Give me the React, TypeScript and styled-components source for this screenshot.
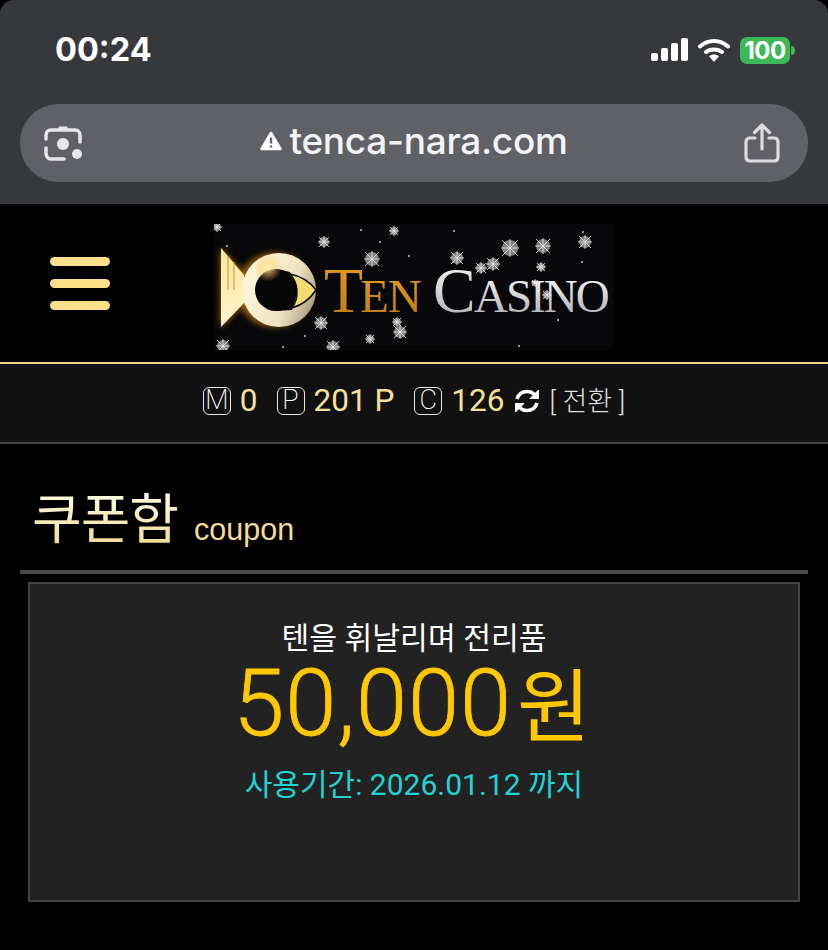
import React from "react";
import styled, { createGlobalStyle } from "styled-components";

const GlobalStyle = createGlobalStyle`
    html, body {
        margin: 0;
        padding: 0;
        background: #000;
    }
    body {
        font-family: Roboto, "Noto Sans CJK KR", sans-serif;
    }
`;

const Page = styled.div`
    width: 828px;
    height: 950px;
    overflow: hidden;
    background: #000;
`;

const Chrome = styled.div`
    height: 204px;
    box-sizing: border-box;
    padding: 0 20px 22px;
    background: #36383c;
    border-radius: 14px 14px 0 0;
    display: flex;
    flex-direction: column;
    justify-content: space-between;
`;

const StatusBar = styled.div`
    height: 100px;
    box-sizing: border-box;
    padding: 30px 18px 0 35px;
    display: flex;
    align-items: flex-start;
    justify-content: space-between;
`;

const Clock = styled.div`
    font-family: Inter, sans-serif;
    font-weight: 700;
    font-size: 32.5px;
    line-height: 40px;
    color: #fff;
`;

const StatusIcons = styled.div`
    display: flex;
    align-items: center;
    gap: 10px;
    height: 40px;
`;

const Battery = styled.div`
    position: relative;
    width: 50px;
    height: 27px;
    border-radius: 7px;
    background: #3cb956;
    color: #fff;
    font-family: Inter, sans-serif;
    font-weight: 700;
    font-size: 24px;
    line-height: 27px;
    letter-spacing: -0.5px;
    text-align: center;
    &::after {
        content: "";
        position: absolute;
        right: -5px;
        top: 9px;
        width: 4px;
        height: 9px;
        border-radius: 0 4px 4px 0;
        background: #3cb956;
    }
`;

const UrlBar = styled.div`
    height: 78px;
    box-sizing: border-box;
    padding: 0 28px 0 24px;
    border-radius: 38px;
    background: #606166;
    display: flex;
    align-items: center;
    justify-content: space-between;
`;

const Domain = styled.div`
    display: flex;
    align-items: center;
    gap: 7px;
    margin: -5px 0 0 2px;
    font-family: Inter, sans-serif;
    font-weight: 500;
    font-size: 37px;
    letter-spacing: -0.3px;
    color: #f4f4f6;
`;

const Header = styled.header`
    height: 160px;
    box-sizing: border-box;
    padding: 20px 0 12px 50px;
    display: flex;
    align-items: flex-start;
    border-bottom: 2px solid #e9d48c;
`;

const MenuButton = styled.div`
    width: 60px;
    margin-top: 33px;
    display: flex;
    flex-direction: column;
    gap: 13px;
`;

const MenuLine = styled.span`
    height: 9px;
    border-radius: 5px;
    background: #fbe08a;
`;

const Logo = styled.div`
    position: relative;
    width: 400px;
    height: 126px;
    margin-left: 104px;
    background: #08080a;
`;

const LogoArt = styled.svg`
    display: block;
    width: 100%;
    height: 100%;
`;

const InfoBar = styled.div`
    height: 80px;
    box-sizing: border-box;
    background: #111;
    border-bottom: 2px solid #444;
    display: flex;
    align-items: center;
    justify-content: center;
    padding: 0 0 4px 0;
`;

const Badge = styled.span<{ $gap?: number }>`
    width: 28px;
    height: 28px;
    box-sizing: border-box;
    border: 1.5px solid #e8e8e8;
    border-radius: 6px;
    color: #fff;
    font-size: 27px;
    font-weight: 200;
    line-height: 25px;
    text-align: center;
    margin-left: ${(p) => p.$gap ?? 0}px;
`;

const Amount = styled.span`
    margin-left: 9px;
    font-size: 31.5px;
    font-weight: 400;
    color: #f8e09a;
    line-height: 40px;
`;

const SwitchLabel = styled.span`
    margin: -3px 0 0 9px;
    font-family: Roboto, "Noto Sans CJK KR", sans-serif;
    font-size: 27px;
    font-weight: 300;
    color: #ddd;
`;

const TitleRow = styled.div`
    height: 130px;
    box-sizing: border-box;
    margin: 0 20px;
    padding: 35px 0 17px 12px;
    border-bottom: 4px solid #4a4a4a;
    display: flex;
    align-items: flex-end;
    gap: 16px;
`;

const Title = styled.h1`
    margin: 0;
    font-family: "Noto Sans CJK KR", sans-serif;
    font-size: 54px;
    line-height: 74px;
    font-weight: 400;
    letter-spacing: -1px;
    background: linear-gradient(180deg, #fffbe0 20%, #f2dc98 85%);
    -webkit-background-clip: text;
    background-clip: text;
    color: transparent;
`;

const TitleSub = styled.span`
    margin-bottom: 6px;
    font-family: "Liberation Sans", sans-serif;
    font-size: 30.5px;
    color: #f6dc96;
`;

const CouponCard = styled.section`
    height: 320px;
    box-sizing: border-box;
    margin: 8px 28px 0;
    padding: 35px 0 0;
    background: #222;
    border: 2px solid #444;
    text-align: center;
`;

const CouponName = styled.div`
    font-family: Roboto, "Noto Sans CJK KR", sans-serif;
    font-size: 30.2px;
    line-height: 40px;
    color: #fff;
`;

const CouponValue = styled.div`
    padding-right: 4px;
    font-family: Roboto, "Noto Sans CJK KR", sans-serif;
    font-size: 92px;
    font-weight: 300;
    line-height: 90px;
    letter-spacing: 1px;
    -webkit-text-stroke: 0.8px #ffc800;
    color: #ffc800;
`;

const CouponUnit = styled.span`
    margin-left: 5px;
    font-size: 80px;
    font-weight: 400;
    letter-spacing: 0;
    -webkit-text-stroke: 0;
`;

const CouponExpiry = styled.div`
    margin-top: 12px;
    font-family: Roboto, "Noto Sans CJK KR", sans-serif;
    font-size: 30px;
    font-weight: 400;
    line-height: 40px;
    color: #22d2d2;
`;

const SerifText = styled.text`
    font-family: "Liberation Serif", serif;
`;

const flakes: [number, number, number][] = [
    [3, 3, 4], [180, 7, 4], [110, 18, 5], [158, 35, 7], [243, 34, 6], [267, 44, 5], [279, 40, 6], [296, 24, 8], [329, 22, 7],
    [371, 18, 6], [327, 43, 4], [107, 99, 6], [183, 98, 4], [186, 108, 6], [156, 115, 4], [9, 122, 6], [119, 123, 6],
    [321, 59, 3], [333, 71, 4],
];

const dots: [number, number][] = [
    [147, 6], [240, 7], [166, 18], [195, 32], [369, 8], [368, 38], [91, 112], [69, 123], [305, 122], [344, 96], [13, 22],
];

const Snowflake = ({ x, y, r }: { x: number; y: number; r: number }) => (
    <g transform={`translate(${x} ${y})`}>
        <circle r={r} fill="#b8b8b8" opacity={0.7} />
        <path d={`M${-r - 1} 0H${r + 1}M0 ${-r - 1}V${r + 1}M${-r} ${-r}L${r} ${r}M${r} ${-r}L${-r} ${r}`} stroke="#eee" strokeWidth={0.8} />
    </g>
);

const App: React.FC = () => {
    return (
        <Page>
            <GlobalStyle />
            <Chrome>
                <StatusBar>
                    <Clock>00:24</Clock>
                    <StatusIcons>
                        <svg width="37" height="24" viewBox="0 0 37 24">
                            <rect x="0" y="15" width="7" height="8" rx="2" fill="#fff" />
                            <rect x="10" y="10" width="7" height="13" rx="2" fill="#fff" />
                            <rect x="20" y="5" width="7" height="18" rx="2" fill="#fff" />
                            <rect x="30" y="0" width="7" height="23" rx="2" fill="#fff" />
                        </svg>
                        <svg width="32" height="24" viewBox="0 0 32 24" fill="none">
                            <path d="M2 8.5C10 1 22 1 30 8.5" stroke="#fff" strokeWidth="4" strokeLinecap="round" />
                            <path d="M8 14C12 10.5 20 10.5 24 14" stroke="#fff" strokeWidth="4" strokeLinecap="round" />
                            <path d="M11 18.2C14 15.8 18 15.8 21 18.2L16 24Z" fill="#fff" />
                        </svg>
                        <Battery>100</Battery>
                    </StatusIcons>
                </StatusBar>
                <UrlBar>
                    <svg width="38" height="38" viewBox="0 0 38 38" fill="none">
                        <path d="M13 7L15 2.5H23L25 7" fill="#e6e6ea" />
                        <path d="M2 15V11C2 8 4 6 7 6H31C34 6 36 8 36 11V15" stroke="#e6e6ea" strokeWidth="3.5" strokeLinecap="round" />
                        <path d="M2 24V29C2 32 4 35 7 35H20" stroke="#e6e6ea" strokeWidth="3.5" strokeLinecap="round" />
                        <path d="M36 15V18" stroke="#e6e6ea" strokeWidth="3.5" strokeLinecap="round" />
                        <circle cx="19" cy="20" r="6" fill="#e6e6ea" />
                        <circle cx="33" cy="30" r="5" fill="#e6e6ea" />
                    </svg>
                    <Domain>
                        <svg width="22" height="20" viewBox="0 0 22 20">
                            <path d="M11 2L20.5 18H1.5Z" fill="#fff" stroke="#fff" strokeWidth="2.5" strokeLinejoin="round" />
                            <path d="M11 6.5V12.5M11 14.5V16.5" stroke="#606166" strokeWidth="2.4" />
                        </svg>
                        tenca-nara.com
                    </Domain>
                    <svg width="36" height="40" viewBox="0 0 36 40" fill="none" stroke="#dcdce0" strokeWidth="3.2" strokeLinecap="round" strokeLinejoin="round">
                        <path d="M11 15H6C3.5 15 2 16.5 2 19V34C2 36.5 3.5 38 6 38H30C32.5 38 34 36.5 34 34V19C34 16.5 32.5 15 30 15H25" />
                        <path d="M18 26V3M10.5 9.5L18 2L25.5 9.5" />
                    </svg>
                </UrlBar>
            </Chrome>
            <Header>
                <MenuButton>
                    <MenuLine />
                    <MenuLine />
                    <MenuLine />
                </MenuButton>
                <Logo>
                    <LogoArt viewBox="0 0 400 126">
                        <defs>
                            <linearGradient id="ring" x1="0" y1="0.3" x2="1" y2="0.7">
                                <stop offset="0" stopColor="#fff8dc" />
                                <stop offset="0.65" stopColor="#f0e2c0" />
                                <stop offset="1" stopColor="#a89a7c" />
                            </linearGradient>
                            <linearGradient id="fin" x1="0" y1="0" x2="0" y2="1">
                                <stop offset="0" stopColor="#ffe89a" />
                                <stop offset="1" stopColor="#fff4d0" />
                            </linearGradient>
                            <linearGradient id="silver" x1="0" y1="0" x2="0" y2="1">
                                <stop offset="0" stopColor="#ffffff" />
                                <stop offset="1" stopColor="#a8a8ac" />
                            </linearGradient>
                            <linearGradient id="gold" x1="0" y1="0" x2="0" y2="1">
                                <stop offset="0" stopColor="#e8a020" />
                                <stop offset="1" stopColor="#b97812" />
                            </linearGradient>
                            <radialGradient id="flare">
                                <stop offset="0" stopColor="#fff0b0" stopOpacity="0.9" />
                                <stop offset="1" stopColor="#ffb030" stopOpacity="0" />
                            </radialGradient>
                            <filter id="glow" x="-30%" y="-30%" width="160%" height="160%">
                                <feGaussianBlur stdDeviation="3" />
                            </filter>
                        </defs>
                        {flakes.map(([x, y, r], i) => (
                            <Snowflake key={i} x={x} y={y} r={r} />
                        ))}
                        {dots.map(([x, y], i) => (
                            <circle key={i} cx={x} cy={y} r={0.9} fill="#ddd" />
                        ))}
                        <g filter="url(#glow)" opacity="0.75">
                            <path d="M7 24L30 51V79L7 103Z" fill="#e8901c" />
                            <circle cx="60" cy="66" r="37" fill="#c87c18" />
                        </g>
                        <path d="M7 24L30 51V79L7 103Z" fill="url(#fin)" />
                        <path d="M14 32V66M20 38V66" stroke="#d89a40" strokeWidth="1.2" />
                        <circle cx="65" cy="66" r="37" fill="url(#ring)" />
                        <circle cx="62" cy="66" r="21" fill="#060606" />
                        <path d="M62 45L76 48L84 66L78 86L62 87Z" fill="#060606" />
                        <path d="M76 50C87 52 96 58 102 66C96 75 88 81 78 84C85 74 85 60 76 50Z" fill="#f2dc6e" stroke="#060606" strokeWidth="1.5" />
                        <circle cx="54" cy="44" r="14" fill="url(#flare)" />
                        <SerifText x="110" y="88" fontSize="64" fill="url(#gold)">T</SerifText>
                        <SerifText x="146" y="88" fontSize="47" letterSpacing="-1" fill="url(#gold)">EN</SerifText>
                        <SerifText x="219" y="88" fontSize="64" fill="url(#silver)">C</SerifText>
                        <SerifText x="260" y="88" fontSize="47" letterSpacing="-2" fill="url(#silver)">ASINO</SerifText>
                    </LogoArt>
                </Logo>
            </Header>
            <InfoBar>
                <Badge>M</Badge>
                <Amount>0</Amount>
                <Badge $gap={19}>P</Badge>
                <Amount>201 P</Amount>
                <Badge $gap={20}>C</Badge>
                <Amount>126</Amount>
                <svg width="26" height="26" viewBox="0 0 26 26" fill="none" stroke="#fff" strokeWidth="3.6" style={{ marginLeft: 10 }}>
                    <path d="M3 11C4.5 6 8.5 3.5 13 3.5C16.5 3.5 19.5 5 21.5 8" />
                    <path d="M23 15C21.5 20 17.5 22.5 13 22.5C9.5 22.5 6.5 21 4.5 18" />
                    <path d="M24.5 2V10.5H16Z" fill="#fff" strokeWidth="1" />
                    <path d="M1.5 24V15.5H10Z" fill="#fff" strokeWidth="1" />
                </svg>
                <SwitchLabel>[ 전환 ]</SwitchLabel>
            </InfoBar>
            <TitleRow>
                <Title>쿠폰함</Title>
                <TitleSub>coupon</TitleSub>
            </TitleRow>
            <CouponCard>
                <CouponName>텐을 휘날리며 전리품</CouponName>
                <CouponValue>
                    50,000<CouponUnit>원</CouponUnit>
                </CouponValue>
                <CouponExpiry>사용기간: 2026.01.12 까지</CouponExpiry>
            </CouponCard>
        </Page>
    );
};

export default App;
